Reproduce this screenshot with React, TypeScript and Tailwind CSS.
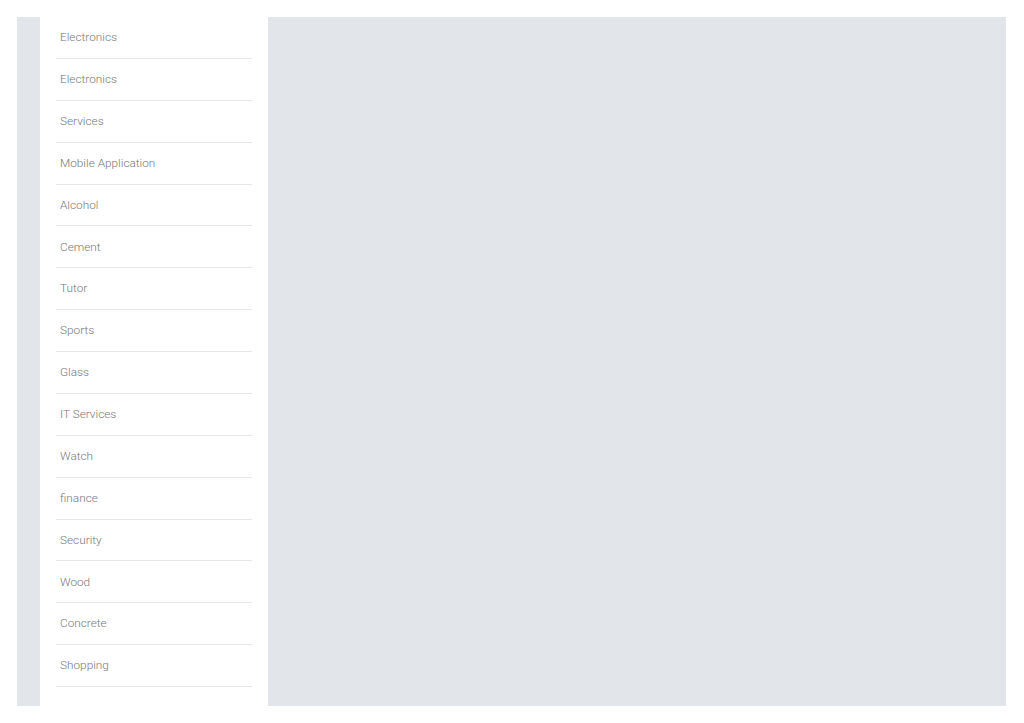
const categories = [
  'Electronics',
  'Electronics',
  'Services',
  'Mobile Application',
  'Alcohol',
  'Cement',
  'Tutor',
  'Sports',
  'Glass',
  'IT Services',
  'Watch',
  'finance',
  'Security',
  'Wood',
  'Concrete',
  'Shopping',
];

export default function App() {
  return (
    <div className="min-h-[723px] bg-white pt-[17px] pl-[17px] pr-[18px] font-['Roboto',sans-serif]">
      <div className="flex h-[689px] overflow-hidden bg-[#e2e5e9]">
        <div className="w-[23px] shrink-0" />
        <aside className="w-[228px] shrink-0 bg-white px-4">
          <ul>
            {categories.map((name, i) => (
              <li
                key={i}
                className="border-b border-[#e8e8e8] px-1 pt-[11.2px] pb-[10.2px] text-[11.8px] font-light leading-[19.5px] text-[#777777]"
              >
                {name}
              </li>
            ))}
          </ul>
        </aside>
        <main className="flex-1" />
      </div>
    </div>
  );
}
